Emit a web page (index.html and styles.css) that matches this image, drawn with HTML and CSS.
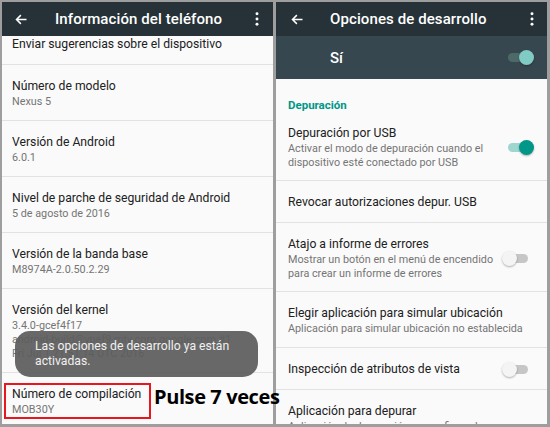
FILE: index.html
```html
<!DOCTYPE html>
<html lang="es">
<head>
    <meta charset="UTF-8">
    <meta name="viewport" content="width=device-width, initial-scale=1.0">
    <title>Opciones de desarrollo</title>
    <link rel="stylesheet" href="styles.css">
</head>
<body>

    <div class="screens">

        <!-- Phone info -->
        <section class="screen">
            <header class="appbar">
                <svg class="back" viewBox="0 0 24 24"><path d="M20 12H5M11 5l-7 7 7 7" fill="none" stroke="#fff" stroke-width="2.4"/></svg>
                <h1>Información del teléfono</h1>
                <svg class="dots" viewBox="0 0 4 16"><circle cx="2" cy="2" r="1.7" fill="#fff"/><circle cx="2" cy="8" r="1.7" fill="#fff"/><circle cx="2" cy="14" r="1.7" fill="#fff"/></svg>
            </header>

            <ul class="prefs">
                <li class="pref pref-cut">
                    <div class="pref-text"><div class="pref-title">Enviar sugerencias sobre el dispositivo</div></div>
                </li>
                <li class="pref">
                    <div class="pref-text">
                        <div class="pref-title">Número de modelo</div>
                        <div class="pref-sub">Nexus 5</div>
                    </div>
                </li>
                <li class="pref">
                    <div class="pref-text">
                        <div class="pref-title">Versión de Android</div>
                        <div class="pref-sub">6.0.1</div>
                    </div>
                </li>
                <li class="pref">
                    <div class="pref-text">
                        <div class="pref-title">Nivel de parche de seguridad de Android</div>
                        <div class="pref-sub">5 de agosto de 2016</div>
                    </div>
                </li>
                <li class="pref">
                    <div class="pref-text">
                        <div class="pref-title">Versión de la banda base</div>
                        <div class="pref-sub">M8974A-2.0.50.2.29</div>
                    </div>
                </li>
                <li class="pref">
                    <div class="pref-text">
                        <div class="pref-title">Versión del kernel</div>
                        <div class="pref-sub">3.4.0-gcef4f17<br>android-build@vpef9.mtv.corp.google.com #1<br>Fri Jul 1 21:51:14 UTC 2016</div>
                    </div>
                </li>
                <li class="pref pref-build">
                    <div class="build-box">
                        <div class="pref-title">Número de compilación</div>
                        <div class="pref-sub">MOB30Y</div>
                    </div>
                </li>
            </ul>

            <div class="toast">Las opciones de desarrollo ya están activadas.</div>
        </section>

        <!-- Developer options -->
        <section class="screen dev">
            <header class="appbar">
                <svg class="back" viewBox="0 0 24 24"><path d="M20 12H5M11 5l-7 7 7 7" fill="none" stroke="#fff" stroke-width="2.4"/></svg>
                <h1>Opciones de desarrollo</h1>
                <svg class="dots" viewBox="0 0 4 16"><circle cx="2" cy="2" r="1.7" fill="#fff"/><circle cx="2" cy="8" r="1.7" fill="#fff"/><circle cx="2" cy="14" r="1.7" fill="#fff"/></svg>
            </header>

            <div class="master">
                <span>Sí</span>
                <span class="switch switch-master"></span>
            </div>

            <ul class="prefs">
                <li class="category">Depuración</li>
                <li class="pref">
                    <div class="pref-text">
                        <div class="pref-title">Depuración por USB</div>
                        <div class="pref-sub">Activar el modo de depuración cuando el dispositivo esté conectado por USB</div>
                    </div>
                    <span class="switch switch-on"></span>
                </li>
                <li class="pref">
                    <div class="pref-text"><div class="pref-title">Revocar autorizaciones depur. USB</div></div>
                </li>
                <li class="pref">
                    <div class="pref-text">
                        <div class="pref-title">Atajo a informe de errores</div>
                        <div class="pref-sub">Mostrar un botón en el menú de encendido para crear un informe de errores</div>
                    </div>
                    <span class="switch"></span>
                </li>
                <li class="pref">
                    <div class="pref-text">
                        <div class="pref-title">Elegir aplicación para simular ubicación</div>
                        <div class="pref-sub">Aplicación para simular ubicación no establecida</div>
                    </div>
                </li>
                <li class="pref">
                    <div class="pref-text"><div class="pref-title">Inspección de atributos de vista</div></div>
                    <span class="switch"></span>
                </li>
                <li class="pref">
                    <div class="pref-text">
                        <div class="pref-title">Aplicación para depurar</div>
                        <div class="pref-sub">Aplicación de depuración no configurada</div>
                    </div>
                </li>
            </ul>
        </section>

        <div class="callout">Pulse 7 veces</div>
    </div>

</body>
</html>
```

FILE: styles.css
```css
body {
    margin: 0;
    font-family: Roboto, "Noto Sans", sans-serif;
}
.screens {
    position: relative;
    display: flex;
    gap: 3px;
    width: 550px;
    height: 427px;
    box-sizing: border-box;
    padding: 2px 3px 3px 2px;
    background: #9e9e9e;
}
.screen {
    flex: 1;
    position: relative;
    overflow: hidden;
    background: #fafafa;
    display: flex;
    flex-direction: column;
}
.appbar {
    height: 34px;
    flex-shrink: 0;
    display: flex;
    align-items: center;
    padding: 0 14px 0 12px;
    background: #263238;
    color: #fff;
}
.appbar .back {
    width: 15px;
    height: 15px;
}
.appbar h1 {
    flex: 1;
    margin: 0 0 0 26px;
    font-size: 15px;
    font-weight: 500;
    letter-spacing: 0.1px;
}
.appbar .dots {
    width: 4px;
    height: 14px;
}
.dev .appbar {
    padding-left: 14px;
    padding-right: 13px;
}
.dev .appbar h1 {
    margin-left: 25px;
}
.prefs {
    list-style: none;
    margin: 0;
    padding: 0;
}
.pref {
    display: flex;
    align-items: center;
    padding: 13px 10px 11px;
    border-bottom: 1px solid #e2e2e2;
}
.pref-cut {
    padding-top: 0;
}
.pref-text {
    flex: 1;
}
.pref-title {
    font-size: 12.2px;
    line-height: 17px;
    color: #212121;
}
.pref-sub {
    font-size: 10.8px;
    line-height: 14px;
    color: #757575;
}
.pref-build {
    padding-top: 10px;
}
.build-box {
    margin-left: -8px;
    padding: 1px 8px 0 6px;
    border: 2px solid #e8161e;
}
.toast {
    position: absolute;
    left: 13px;
    top: 329px;
    width: 243px;
    box-sizing: border-box;
    padding: 8px 20px;
    border-radius: 15px;
    background: rgba(92, 92, 92, 0.93);
    color: #f0f0f0;
    font-size: 12.2px;
    line-height: 15px;
}
.callout {
    position: absolute;
    left: 154px;
    top: 387px;
    font-family: "Open Sans", sans-serif;
    font-size: 20px;
    font-weight: 700;
    line-height: 20px;
    letter-spacing: -0.4px;
    color: #000;
    white-space: nowrap;
}

/* developer options */
.master {
    height: 43px;
    flex-shrink: 0;
    display: flex;
    align-items: center;
    padding: 0 12px 0 54px;
    background: #37474f;
    color: #fff;
    font-size: 15px;
    font-weight: 500;
}
.master span:first-child {
    flex: 1;
}
.dev .pref {
    padding-left: 12px;
    padding-right: 12px;
}
.dev .pref-sub {
    line-height: 13.5px;
}
.category {
    padding: 20px 12px 0;
    font-size: 11.5px;
    line-height: 13px;
    font-weight: 700;
    color: #009688;
}
.switch {
    position: relative;
    flex-shrink: 0;
    width: 35px;
    height: 17px;
    margin-left: 4px;
}
.switch::before {
    content: "";
    position: absolute;
    left: 8px;
    top: 4px;
    width: 20px;
    height: 9px;
    border-radius: 5px;
    background: #c6c6c6;
}
.switch::after {
    content: "";
    position: absolute;
    left: 2px;
    top: 1px;
    width: 15px;
    height: 15px;
    border-radius: 50%;
    background: #f4f4f4;
    box-shadow: 0 1px 2px rgba(0, 0, 0, 0.3);
}
.switch-on::before {
    background: #9fd6d0;
}
.switch-on::after {
    left: 19px;
    background: #009688;
}
.switch-master::before {
    background: #4d6a69;
}
.switch-master::after {
    left: 19px;
    background: #80cbc4;
}
```
